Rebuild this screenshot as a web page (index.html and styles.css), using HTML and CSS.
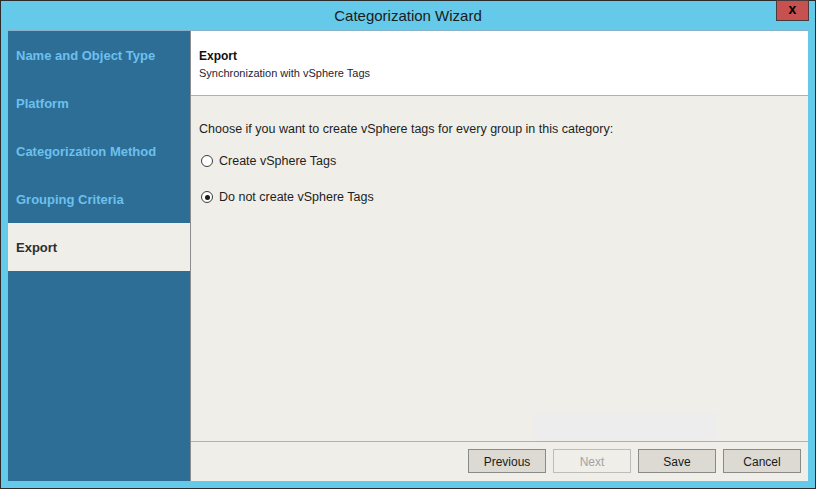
FILE: index.html
```html
<!DOCTYPE html>
<html>
<head>
<meta charset="utf-8">
<link rel="stylesheet" href="styles.css">
</head>
<body>
<div class="window">
  <div class="titlebar">Categorization Wizard</div>
  <div class="close">x</div>
  <div class="frame">
    <div class="sidebar">
      <div class="step">Name and Object Type</div>
      <div class="step">Platform</div>
      <div class="step">Categorization Method</div>
      <div class="step">Grouping Criteria</div>
      <div class="step active">Export</div>
    </div>
    <div class="main">
      <div class="header">
        <div class="h-title">Export</div>
        <div class="h-sub">Synchronization with vSphere Tags</div>
      </div>
      <div class="content">
        <div class="prompt">Choose if you want to create vSphere tags for every group in this category:</div>
        <div class="radio-row"><span class="radio"></span><span>Create vSphere Tags</span></div>
        <div class="radio-row"><span class="radio checked"></span><span>Do not create vSphere Tags</span></div>
        <div class="ghost"></div>
      </div>
      <div class="footer">
        <div class="btn">Previous</div>
        <div class="btn disabled">Next</div>
        <div class="btn">Save</div>
        <div class="btn">Cancel</div>
      </div>
    </div>
  </div>
</div>
</body>
</html>
```
FILE: styles.css
```css
html, body { margin: 0; padding: 0; }
body { width: 816px; height: 489px; overflow: hidden; font-family: "Liberation Sans", Arial, sans-serif; }
.window {
  position: relative;
  width: 816px; height: 489px;
  box-sizing: border-box;
  border: 1px solid #2b2b2b;
  background: #65c9ea;
  display: flex; flex-direction: column;
}
.titlebar {
  height: 29px;
  line-height: 30px;
  text-align: center;
  font-size: 15px;
  color: #1b1b1b;
  font-family: "Liberation Sans", Arial, sans-serif;
}
.close {
  position: absolute;
  top: -1px; right: 6px;
  width: 33px; height: 21px;
  box-sizing: border-box;
  border: 1px solid #4a3b3b;
  background: #c75050;
  color: #000;
  font-weight: bold;
  font-size: 14px;
  line-height: 17px;
  text-align: center;
}
.frame {
  margin: 0 7px 7px 7px;
  height: 451px;
  box-sizing: border-box;
  border-top: 1px solid #89b1c8;
  display: flex;
}
.sidebar {
  width: 182px;
  background: #2d6e96;
  border-right: 1px solid #8c8c8c;
}
.step {
  height: 48px;
  line-height: 50px;
  padding-left: 8px;
  font-size: 13px;
  font-weight: bold;
  color: #6cc0ee;
}
.step.active { background: #efeee8; color: #2e2e2e; }
.main {
  flex: 1;
  display: flex; flex-direction: column;
  background: #efeee8;
}
.header {
  height: 65px;
  box-sizing: border-box;
  background: #fff;
  border-bottom: 1px solid #b2b0aa;
  padding: 17px 8px 0;
}
.h-title { font-size: 12px; font-weight: bold; color: #111; line-height: 16px; }
.h-sub { font-size: 11px; color: #1d1d35; line-height: 16px; margin-top: 1px; }
.content {
  position: relative;
  flex: 1;
  padding: 25px 8px 0;
  font-size: 12.5px;
  color: #1e1e1e;
}
.prompt { line-height: 16px; }
.radio-row {
  display: flex; align-items: center;
  height: 16px;
  margin-top: 16px;
  gap: 6px;
  padding-left: 2px;
}
.radio-row + .radio-row { margin-top: 20px; }
.radio {
  width: 12px; height: 12px;
  box-sizing: border-box;
  border: 1px solid #3c3c3c;
  border-radius: 50%;
  background: #fff;
  display: flex; align-items: center; justify-content: center;
}
.radio.checked::after {
  content: "";
  width: 5px; height: 5px;
  border-radius: 50%;
  background: #1a1a1a;
}
.ghost {
  position: absolute;
  left: 342px; bottom: 0;
  width: 184px; height: 28px;
  background: #ededed;
}
.footer {
  height: 40px;
  box-sizing: border-box;
  border-top: 1px solid #b2b0aa;
  padding: 7px 7px 0;
  display: flex;
  justify-content: flex-end;
  gap: 7px;
}
.btn {
  width: 78px; height: 24px;
  box-sizing: border-box;
  border: 1px solid #8a8a88;
  background: #dcdad3;
  font-size: 12px;
  color: #1a1a1a;
  text-align: center;
  line-height: 24px;
}
.btn.disabled { background: #efeee8; border-color: #bdbcb8; color: #a3a3a3; }
```
